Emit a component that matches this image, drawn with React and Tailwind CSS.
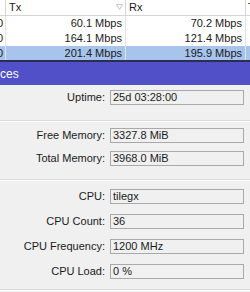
import React from "react";

const rows = [
  { tx: "60.1 Mbps", rx: "70.2 Mbps" },
  { tx: "164.1 Mbps", rx: "121.4 Mbps" },
  { tx: "201.4 Mbps", rx: "195.9 Mbps", selected: true },
];

function Field({ label, value }) {
  return (
    <div className="flex items-center h-[15px]">
      <div className="w-[106px] text-right pr-[1px] whitespace-nowrap">{label}</div>
      <div className="ml-[4px] w-[134px] h-[15px] border border-[#a9a9a9] bg-[#f0f0f0] pl-[2px] leading-[13px] whitespace-nowrap">
        {value}
      </div>
    </div>
  );
}

function Separator() {
  return (
    <div>
      <div className="h-px bg-[#d9d9d9]"></div>
      <div className="h-px bg-white"></div>
    </div>
  );
}

export default function App() {
  return (
    <div className="w-[250px] h-[292px] overflow-hidden bg-[#f0f0f0] font-['Liberation_Sans',Arial,sans-serif] text-[11px] text-[#1a1a1a]">
      {/* Traffic table */}
      <div className="bg-white">
        <div className="flex h-[16px] border-b border-[#d5d5d5]">
          <div className="w-[6px] shrink-0 border-r border-[#d5d5d5]"></div>
          <div className="w-[120px] shrink-0 border-r border-[#d5d5d5] flex justify-between pl-[3px] pr-[2px]">
            <span className="leading-[15px]">Tx</span>
            <svg width="7" height="6" viewBox="0 0 7 6" className="mt-[4px]">
              <path d="M0.5 0.5 L6.5 0.5 L3.5 5.5 Z" fill="none" stroke="#c4c4c4" strokeWidth="1" />
            </svg>
          </div>
          <div className="w-[120px] shrink-0 border-r border-[#d5d5d5] pl-[3px] leading-[15px]">Rx</div>
          <div className="flex-1 pl-[2px] leading-[15px] overflow-hidden">T</div>
        </div>
        {rows.map((r, i) => (
          <div
            key={i}
            className={`flex ${i === 2 ? "h-[14px]" : "h-[15px]"} ${r.selected ? "bg-[#a6c4ec]" : "bg-white"}`}
          >
            <div className="w-[6px] shrink-0 border-r border-[#e3e3e3] overflow-hidden flex justify-end pr-[2px] leading-[14px]">
              <span>0</span>
            </div>
            <div className="w-[120px] shrink-0 border-r border-[#e3e3e3] text-right pr-[3px] leading-[14px]">{r.tx}</div>
            <div className="w-[120px] shrink-0 border-r border-[#e3e3e3] text-right pr-[3px] leading-[14px]">{r.rx}</div>
            <div className="flex-1"></div>
          </div>
        ))}
      </div>
      <div className="h-[2px] bg-[#2c2c54]"></div>

      {/* Window title */}
      <div className="h-[23px] bg-[#5150c8] text-white text-[12px] flex items-center">ces</div>

      {/* Resources form */}
      <div className="pt-[5px]">
        <Field label="Uptime:" value="25d 03:28:00" />
        <div className="mt-[15px]">
          <Separator />
        </div>
        <div className="mt-[6px] flex flex-col gap-[8px]">
          <Field label="Free Memory:" value="3327.8 MiB" />
          <Field label="Total Memory:" value="3968.0 MiB" />
        </div>
        <div className="mt-[13px]">
          <Separator />
        </div>
        <div className="mt-[8px] flex flex-col gap-[10px]">
          <Field label="CPU:" value="tilegx" />
          <Field label="CPU Count:" value="36" />
          <Field label="CPU Frequency:" value="1200 MHz" />
          <Field label="CPU Load:" value="0 %" />
        </div>
        <div className="mt-[10px]">
          <Separator />
        </div>
      </div>
    </div>
  );
}
